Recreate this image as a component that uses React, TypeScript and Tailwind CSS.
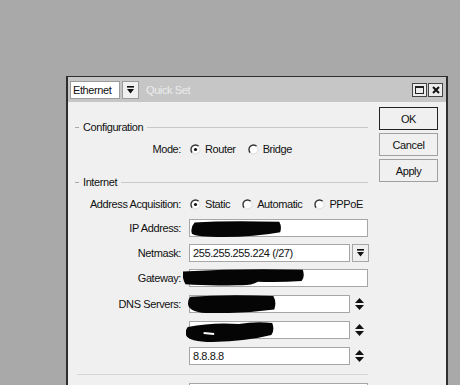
import type { ReactNode } from "react";

const font = "font-['Liberation_Sans',Arial,sans-serif] text-[11px] tracking-[-0.4px] leading-[14px] text-[#111]";

function DropArrow() {
  return (
    <svg width="7" height="8" viewBox="0 0 7 8">
      <rect x="0" y="0" width="7" height="1.6" fill="#111" />
      <polygon points="0,3 7,3 3.5,7.5" fill="#111" />
    </svg>
  );
}

function UpDown() {
  return (
    <svg width="9" height="12" viewBox="0 0 9 12">
      <polygon points="4.5,0 9,5 0,5" fill="#111" />
      <polygon points="0,7 9,7 4.5,12" fill="#111" />
    </svg>
  );
}

function Radio({ checked }: { checked?: boolean }) {
  return (
    <svg width="11" height="11" viewBox="0 0 11 11" className="shrink-0">
      <circle cx="5.5" cy="5.5" r="4.5" fill="#fff" />
      <path d="M8.7 2.3 A4.5 4.5 0 0 0 2.3 8.7" stroke="#333" strokeWidth="1.4" fill="none" />
      <path d="M8.7 2.3 A4.5 4.5 0 0 1 2.3 8.7" stroke="#e2e2e2" strokeWidth="1.2" fill="none" />
      {checked && <circle cx="5.5" cy="5.5" r="1.6" fill="#111" />}
    </svg>
  );
}

// redaction scribbles drawn over the fields
function Blob({ d, className, streak }: { d: string; className: string; streak?: boolean }) {
  return (
    <svg className={`absolute ${className}`} viewBox="0 0 100 20" preserveAspectRatio="none">
      <path d={d} fill="#050505" />
      {streak && <path d="M20 11 L32 12" stroke="#fff" strokeWidth="1.8" />}
    </svg>
  );
}

function Section({ title }: { title: string }) {
  return (
    <div className="flex items-center h-[14px]">
      <div className="w-[4px] h-px bg-[#a8a8a8]" />
      <span className="px-[4px]">{title}</span>
      <div className="flex-1 h-px bg-[#c9c9c9]" />
    </div>
  );
}

function Row({ label, children, className = "" }: { label?: string; children: ReactNode; className?: string }) {
  return (
    <div className={`flex items-center ${className}`}>
      <div className="w-[106px] text-right shrink-0">{label}</div>
      <div className="ml-[8px] flex items-center">{children}</div>
    </div>
  );
}

function Field({ w, children }: { w: string; children?: ReactNode }) {
  return (
    <div className={`relative h-[18px] ${w} bg-white border border-[#a6a6a6] pl-[3px] flex items-center`}>
      {children}
    </div>
  );
}

function Opt({ label, checked, gap }: { label: string; checked?: boolean; gap: string }) {
  return (
    <div className={`flex items-center ${gap}`}>
      <Radio checked={checked} />
      <span className="ml-[4px]">{label}</span>
    </div>
  );
}

export default function App() {
  return (
    <div className={`w-[460px] h-[385px] overflow-hidden bg-[#a9a9a9] pt-[76px] pl-[66px] ${font}`}>
      <div className="w-[382px] border-t border-x-2 border-[#2e2e2e]">
        <div className="h-[25px] bg-[#c6c6c6] flex items-center pl-[2px] pr-[3px]">
          <div className="w-[50px] h-[18px] bg-white border border-[#9c9c9c] pl-[2px] flex items-center">Ethernet</div>
          <div className="ml-[2px] w-[17px] h-[18px] bg-[#f0f0f0] border border-[#9c9c9c] flex items-center justify-center">
            <DropArrow />
          </div>
          <span className="ml-[7px] text-[#ececec]">Quick Set</span>
          <div className="ml-auto flex gap-px">
            <div className="w-[15px] h-[14px] bg-[#ececec] border border-[#444] flex items-center justify-center">
              <div className="w-[9px] h-[8px] border border-[#222] border-t-2" />
            </div>
            <div className="w-[15px] h-[14px] bg-[#ececec] border border-[#444] flex items-center justify-center">
              <svg width="8" height="8" viewBox="0 0 8 8">
                <path d="M1 1 L7 7 M7 1 L1 7" stroke="#111" strokeWidth="2" />
              </svg>
            </div>
          </div>
        </div>

        <div className="h-[300px] bg-[#f0f0f0] flex pl-[7px]">
          <div className="w-[293px] pt-[18px]">
            <Section title="Configuration" />
            <Row label="Mode:" className="mt-[8px] h-[14px]">
              <div className="flex items-center ml-px">
                <Opt label="Router" checked gap="" />
                <Opt label="Bridge" gap="ml-[12px]" />
              </div>
            </Row>

            <div className="mt-[19px]">
              <Section title="Internet" />
            </div>
            <Row label="Address Acquisition:" className="mt-[8px] h-[14px]">
              <div className="flex items-center ml-px">
                <Opt label="Static" checked gap="" />
                <Opt label="Automatic" gap="ml-[12px]" />
                <Opt label="PPPoE" gap="ml-[12px]" />
              </div>
            </Row>

            <Row label="IP Address:" className="mt-[8px]">
              <Field w="w-[179px]">
                <span className="text-[9px]">1</span>
                <Blob className="left-[1px] top-[1px] w-[91px] h-[16px]" d="M4 2 Q40 -1 97 1 Q100 7 98 14 Q70 20 35 20 Q6 20 1 16 Q-1 8 4 2 Z" />
              </Field>
            </Row>

            <Row label="Netmask:" className="mt-[7px]">
              <Field w="w-[161px]">255.255.255.224 (/27)</Field>
              <div className="ml-[2px] w-[17px] h-[18px] bg-[#f0f0f0] border border-[#a6a6a6] flex items-center justify-center">
                <DropArrow />
              </div>
            </Row>

            <Row label="Gateway:" className="mt-[7px]">
              <Field w="w-[179px]">
                <Blob className="left-[-7px] top-[-1px] w-[121px] h-[17px]" d="M0 3 Q50 -1 99 1 Q101 9 98 14 Q80 16 62 15 Q56 20 45 19 Q20 20 2 18 Q-1 10 0 3 Z" />
              </Field>
            </Row>

            <Row label="DNS Servers:" className="mt-[8px]">
              <Field w="w-[161px]">
                <Blob className="left-[-2px] top-[-1px] w-[88px] h-[18px]" d="M3 2 Q40 -1 97 1 Q101 8 98 16 Q60 21 20 20 Q1 19 0 10 Q0 4 3 2 Z" />
              </Field>
              <div className="ml-[5px]">
                <UpDown />
              </div>
            </Row>

            <Row className="mt-[8px]">
              <Field w="w-[161px]">
                <Blob
                  streak
                  className="left-[-4px] top-[0px] w-[88px] h-[20px]"
                  d="M2 5 Q30 0 60 2 Q80 -1 98 1 Q101 8 97 13 Q70 19 30 20 Q3 20 0 13 Q-1 8 2 5 Z"
                />
              </Field>
              <div className="ml-[5px]">
                <UpDown />
              </div>
            </Row>

            <Row className="mt-[8px]">
              <Field w="w-[161px]">8.8.8.8</Field>
              <div className="ml-[5px]">
                <UpDown />
              </div>
            </Row>

            <div className="mt-[9px] ml-[2px] w-[291px] h-px bg-[#d6d6d6]" />

            <Row className="mt-[8px]">
              <Field w="w-[179px]" />
            </Row>
          </div>

          <div className="ml-[11px] w-[59px] pt-[5px] flex flex-col gap-[3px]">
            <div className="h-[23px] border border-[#222] bg-[#f0f0f0] flex items-center justify-center">OK</div>
            <div className="h-[23px] border border-[#a0a0a0] bg-[#f0f0f0] flex items-center justify-center">Cancel</div>
            <div className="h-[23px] border border-[#a0a0a0] bg-[#f0f0f0] flex items-center justify-center">Apply</div>
          </div>
        </div>
      </div>
    </div>
  );
}
